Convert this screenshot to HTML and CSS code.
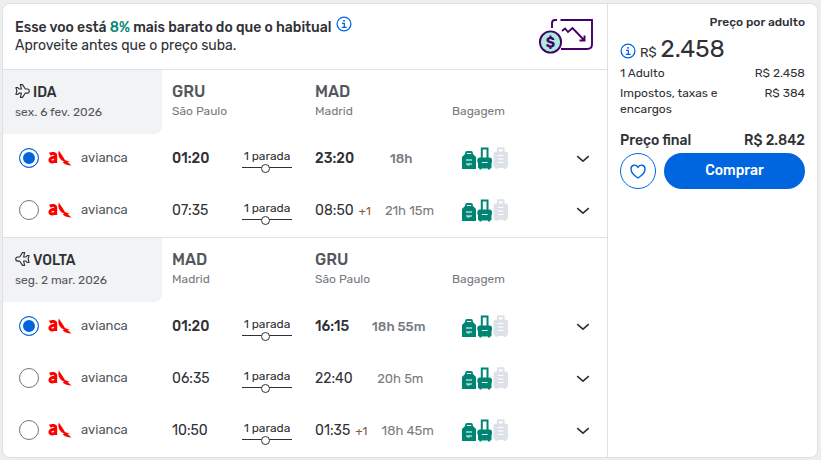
FILE: index.html
```html
<!DOCTYPE html>
<html lang="pt-BR">
<head>
<meta charset="utf-8">
<meta name="viewport" content="width=device-width, initial-scale=1">
<title>Voos GRU – MAD</title>
<link rel="stylesheet" href="styles.css">
</head>
<body>
<svg class="sprite" aria-hidden="true">
  <symbol id="info" viewBox="0 0 16 16">
    <circle cx="8" cy="8" r="6.9" fill="none" stroke="#0066e0" stroke-width="1.3"/>
    <path d="M6 7.400h2.300v4M5.800 11.300h4.800" fill="none" stroke="#0066e0" stroke-width="1.300"/>
    <rect x="7.200" y="4" width="1.600" height="1.700" fill="#0066e0"/>
  </symbol>
  <symbol id="plane" viewBox="0 0 16 16">
    <path d="M1 4.300h2l1.300 1.500h2.500L5.700 1.200h2.300l3 4.600h2.200c1.300 0 2 .9 2 2.200s-.7 2.200-2 2.200H11l-3 4.600H5.700l1.100-4.600H4.300L3 11.700H1L2 8z" fill="none" stroke="#2f3136" stroke-width="1.200" stroke-linejoin="round"/>
  </symbol>
  <symbol id="avianca" viewBox="0 0 24 18">
    <path d="M1.700 5.200C4 4 7.700 4 7.700 7.200V14M8 8.300C4.200 8.100 1.900 8.900 1.900 11c0 2.700 4.300 2.400 5.800-.1" fill="none" stroke="#f00" stroke-width="3"/>
    <path d="M10.800 1.500c1.700 2.500 4 5.800 6.200 9.500 1.700.8 3.200 1.200 5 1.200l-2.500.9 4 3.400c-3 .1-6.500-1-9-3l2-.8C13.300 11.500 9 8.500 10.800 1.500z" fill="#f00"/>
  </symbol>
  <symbol id="bags" viewBox="0 0 48 24">
    <path d="M5 7.500V6q0-1 1-1h4q1 0 1 1v1.500" fill="none" stroke="#008575" stroke-width="1.800"/>
    <path d="M4 7h8l3 3V22H1V10z" fill="#008575"/>
    <path d="M5 13h6M5 17h6M6.500 18h2" stroke="#fff" stroke-width="1"/>
    <path d="M20.800 11V1.400h5.700V11" fill="none" stroke="#008575" stroke-width="2"/>
    <path d="M18.500 10.500h10q2.500 0 2.500 2.500v1.500q0 1-.5 1.500v4.500q0 1-1 1h-.5v1h-2v-1h-6.500v1h-2v-1h-.500q-1 0-1-1V16q-.7-.5-.7-1.500V13q0-2.500 2.200-2.500z" fill="#008575"/>
    <path d="M21 15.500h5.500" stroke="#fff"/>
    <path d="M37 5V1.200h5.500V5" fill="none" stroke="#dde1e8" stroke-width="2"/>
    <path d="M35 4.500h9.500q2.500 0 2.500 2.500v11q0 3-2 3v1h-2v-1h-6.500v1h-2v-1Q32.500 21 32.500 18V7q0-2.500 2.500-2.500z" fill="#dde1e8"/>
    <path d="M37 8.500h5.500M37 12h5.500M37 15.500h5.500" stroke="#fff"/>
  </symbol>
  <symbol id="chevron" viewBox="0 0 14 8"><path d="M1.200 1.200 7 6.200l5.800-5" fill="none" stroke="#2f3136" stroke-width="1.600"/></symbol>
</svg>

<main class="card">
  <div class="trip">
    <header class="deal">
      <div class="deal-text">
        <h1>Esse voo está <em>8%</em> mais barato do que o habitual <button class="info" type="button" aria-label="Informações"><svg><use href="#info"/></svg></button></h1>
        <p>Aproveite antes que o preço suba.</p>
      </div>
      <svg class="deal-art" viewBox="0 0 56 38" aria-hidden="true">
        <g fill="none" stroke="#43006b" stroke-width="1.900">
          <path d="M14 10V5q0-3 3-3h2M22.500 2H54v24.500q0 4.500-5 4.500H23"/>
          <path d="m24 13 3-2.500 3 3.500 4.500-4L46 22M41.500 22.500H46.500v-5"/>
        </g>
        <circle cx="12.500" cy="24" r="10.600" fill="#aeeadb" stroke="#43006b" stroke-width="1.900"/>
        <text x="12.500" y="29" text-anchor="middle">$</text>
      </svg>
    </header>

    <section class="leg">
      <div class="leg-head">
        <div class="tab"><h2><svg><use href="#plane"/></svg>IDA</h2><p>sex. 6 fev. 2026</p></div>
        <div class="from"><b>GRU</b><span>São Paulo</span></div>
        <div class="to"><b>MAD</b><span>Madrid</span></div>
        <div class="bag-title">Bagagem</div>
      </div>
      <div class="flight selected">
        <label class="carrier"><input type="radio" name="ida" checked><svg><use href="#avianca"/></svg>avianca</label>
        <time>01:20</time><div class="stop">1 parada<i></i></div>
        <div class="arrival"><time>23:20</time><span class="duration">18h</span></div>
        <svg class="bags"><use href="#bags"/></svg>
        <button class="expand" type="button" aria-label="Ver detalhes"><svg><use href="#chevron"/></svg></button>
      </div>
      <div class="flight">
        <label class="carrier"><input type="radio" name="ida"><svg><use href="#avianca"/></svg>avianca</label>
        <time>07:35</time><div class="stop">1 parada<i></i></div>
        <div class="arrival"><time>08:50</time><sup>+1</sup><span class="duration">21h 15m</span></div>
        <svg class="bags"><use href="#bags"/></svg>
        <button class="expand" type="button" aria-label="Ver detalhes"><svg><use href="#chevron"/></svg></button>
      </div>
    </section>

    <section class="leg">
      <div class="leg-head">
        <div class="tab"><h2><svg class="back"><use href="#plane"/></svg>VOLTA</h2><p>seg. 2 mar. 2026</p></div>
        <div class="from"><b>MAD</b><span>Madrid</span></div>
        <div class="to"><b>GRU</b><span>São Paulo</span></div>
        <div class="bag-title">Bagagem</div>
      </div>
      <div class="flight selected">
        <label class="carrier"><input type="radio" name="volta" checked><svg><use href="#avianca"/></svg>avianca</label>
        <time>01:20</time><div class="stop">1 parada<i></i></div>
        <div class="arrival"><time>16:15</time><span class="duration">18h 55m</span></div>
        <svg class="bags"><use href="#bags"/></svg>
        <button class="expand" type="button" aria-label="Ver detalhes"><svg><use href="#chevron"/></svg></button>
      </div>
      <div class="flight">
        <label class="carrier"><input type="radio" name="volta"><svg><use href="#avianca"/></svg>avianca</label>
        <time>06:35</time><div class="stop">1 parada<i></i></div>
        <div class="arrival"><time>22:40</time><span class="duration">20h 5m</span></div>
        <svg class="bags"><use href="#bags"/></svg>
        <button class="expand" type="button" aria-label="Ver detalhes"><svg><use href="#chevron"/></svg></button>
      </div>
      <div class="flight">
        <label class="carrier"><input type="radio" name="volta"><svg><use href="#avianca"/></svg>avianca</label>
        <time>10:50</time><div class="stop">1 parada<i></i></div>
        <div class="arrival"><time>01:35</time><sup>+1</sup><span class="duration">18h 45m</span></div>
        <svg class="bags"><use href="#bags"/></svg>
        <button class="expand" type="button" aria-label="Ver detalhes"><svg><use href="#chevron"/></svg></button>
      </div>
    </section>
  </div>

  <aside class="price">
    <p class="per-adult">Preço por adulto</p>
    <div class="amount"><button class="info" type="button" aria-label="Informações do preço"><svg><use href="#info"/></svg></button><span class="currency">R$</span><strong>2.458</strong></div>
    <dl>
      <div><dt>1 Adulto</dt><dd>R$ 2.458</dd></div>
      <div><dt>Impostos, taxas e encargos</dt><dd>R$ 384</dd></div>
      <div class="total"><dt>Preço final</dt><dd>R$ 2.842</dd></div>
    </dl>
    <div class="actions">
      <button class="fav" type="button" aria-label="Favoritar"><svg viewBox="0 0 18 16"><path d="M9 15C6 13.200 2 9.500 2 6 2 1.500 7 1 9 4.300 11 1 16 1.500 16 6 16 9.500 12 13.200 9 15z" fill="none" stroke="#0066e0" stroke-width="1.400" stroke-linejoin="round"/></svg></button>
      <button class="buy" type="button">Comprar</button>
    </div>
  </aside>
</main>
</body>
</html>
```
FILE: styles.css
```css
* { box-sizing: border-box; margin: 0; padding: 0; }
body {
  background: #eee;
  color: #2f3136;
  font: 14px/20px Rubik, Roboto, "Liberation Sans", sans-serif;
  padding: 3px 3px 2px 2px;
}
button { background: none; border: 0; font: inherit; cursor: pointer; }
svg { display: block; }
.sprite { display: none; }

.card {
  display: flex;
  background: #fff;
  border: 1px solid #dde1e8;
  border-radius: 8px;
  overflow: hidden;
}
.trip { flex: 1; min-width: 0; }

.deal {
  display: flex;
  justify-content: space-between;
  align-items: center;
  height: 65px;
  padding: 0 13px 0 12px;
}
.deal h1 { display: flex; font-size: 14px; font-weight: 500; line-height: 18px; white-space: pre; }
.deal em { color: #008575; font-style: normal; }
.deal p { font-size: 14px; line-height: 18px; }
.info, .info svg { width: 16px; height: 16px; }
.deal .info { margin: -3px 0 0 1px; }
.deal-art { width: 56px; height: 38px; }
.deal-art text { fill: #43006b; font-size: 14px; font-weight: 700; }

.leg { border-top: 1px solid #dde1e8; }
.leg-head, .flight {
  display: grid;
  grid-template-columns: 169px 70px 73px 133px 1fr 36px;
}
.leg-head { height: 63px; }
.tab {
  width: 159px;
  padding: 13px 12px;
  background: #f2f3f5;
  border-bottom-right-radius: 8px;
}
.tab h2 { display: flex; gap: 3px; font-size: 14px; font-weight: 500; line-height: 20px; }
.tab svg { width: 15px; height: 16px; }
.tab .back { transform: scaleX(-1); }
.tab p { font-size: 12px; line-height: 18px; color: #54575c; }
.from, .to { padding-top: 12px; }
.from { grid-column: 2 / 4; }
.from b, .to b { display: block; font-size: 16px; font-weight: 500; line-height: 20px; color: #54575c; }
.from span, .to span, .bag-title { display: block; font-size: 12px; line-height: 18px; color: #777b82; }
.bag-title { padding-top: 32px; margin-left: 4px; }

.flight { height: 52px; align-items: center; }
.carrier { display: flex; align-items: center; padding-left: 16px; font-size: 13px; color: #54575c; }
.carrier svg { width: 24px; height: 18px; margin: 0 9px; }
.carrier input {
  appearance: none;
  width: 20px;
  height: 20px;
  border: 1px solid #6f747c;
  border-radius: 50%;
  background: #fff;
}
.carrier input:checked { border-color: #0066e0; background: #0066e0; box-shadow: inset 0 0 0 3px #fff; }
.carrier { margin-bottom: 2px; }
time { font-size: 14px; }
.selected time, .selected .duration { font-weight: 500; }
.stop { width: 50px; font-size: 12px; line-height: 16px; text-align: center; white-space: nowrap; }
.stop i {
  display: flex;
  justify-content: center;
  padding-right: 4px;
  height: 7px;
  background: linear-gradient(#2f3136, #2f3136) center / 100% 1px no-repeat;
}
.stop i::after {
  content: "";
  width: 7px;
  height: 7px;
  border: 1px solid #2f3136;
  border-radius: 50%;
  background: #fff;
}
.arrival { display: flex; align-items: center; }
.arrival sup { margin-left: 5px; font-size: 12px; line-height: 20px; color: #8a5a35; }
.duration { flex: 1; text-align: center; font-size: 13px; color: #777b82; }
.bags { width: 48px; height: 24px; margin-left: 13px; }
.expand { width: 24px; height: 24px; padding: 8px 5px; }
.expand svg { width: 14px; height: 8px; }

.price { width: 210px; padding: 8px 12px; border-left: 1px solid #dde1e8; }
.per-adult { text-align: right; font-size: 12px; font-weight: 500; }
.amount { display: flex; align-items: baseline; gap: 4px; height: 33px; line-height: 34px; }
.amount .info { align-self: center; margin-top: 4px; }
.amount .currency { font-size: 13px; }
.amount strong { font-size: 24px; font-weight: 400; }
dl { font-size: 12px; line-height: 16px; }
dl div { display: flex; justify-content: space-between; gap: 12px; margin-bottom: 4px; }
dt { max-width: 116px; }
dd { white-space: nowrap; }
dl .total { margin: 14px 0 2px; font-size: 14px; font-weight: 500; line-height: 20px; }
.actions { display: flex; gap: 8px; }
.fav, .buy { height: 36px; border-radius: 18px; }
.fav { display: grid; place-items: center; width: 36px; border: 1px solid #0066e0; }
.fav svg { width: 18px; height: 16px; }
.buy { flex: 1; background: #0066e0; color: #fff; font-size: 14px; font-weight: 500; }
```
